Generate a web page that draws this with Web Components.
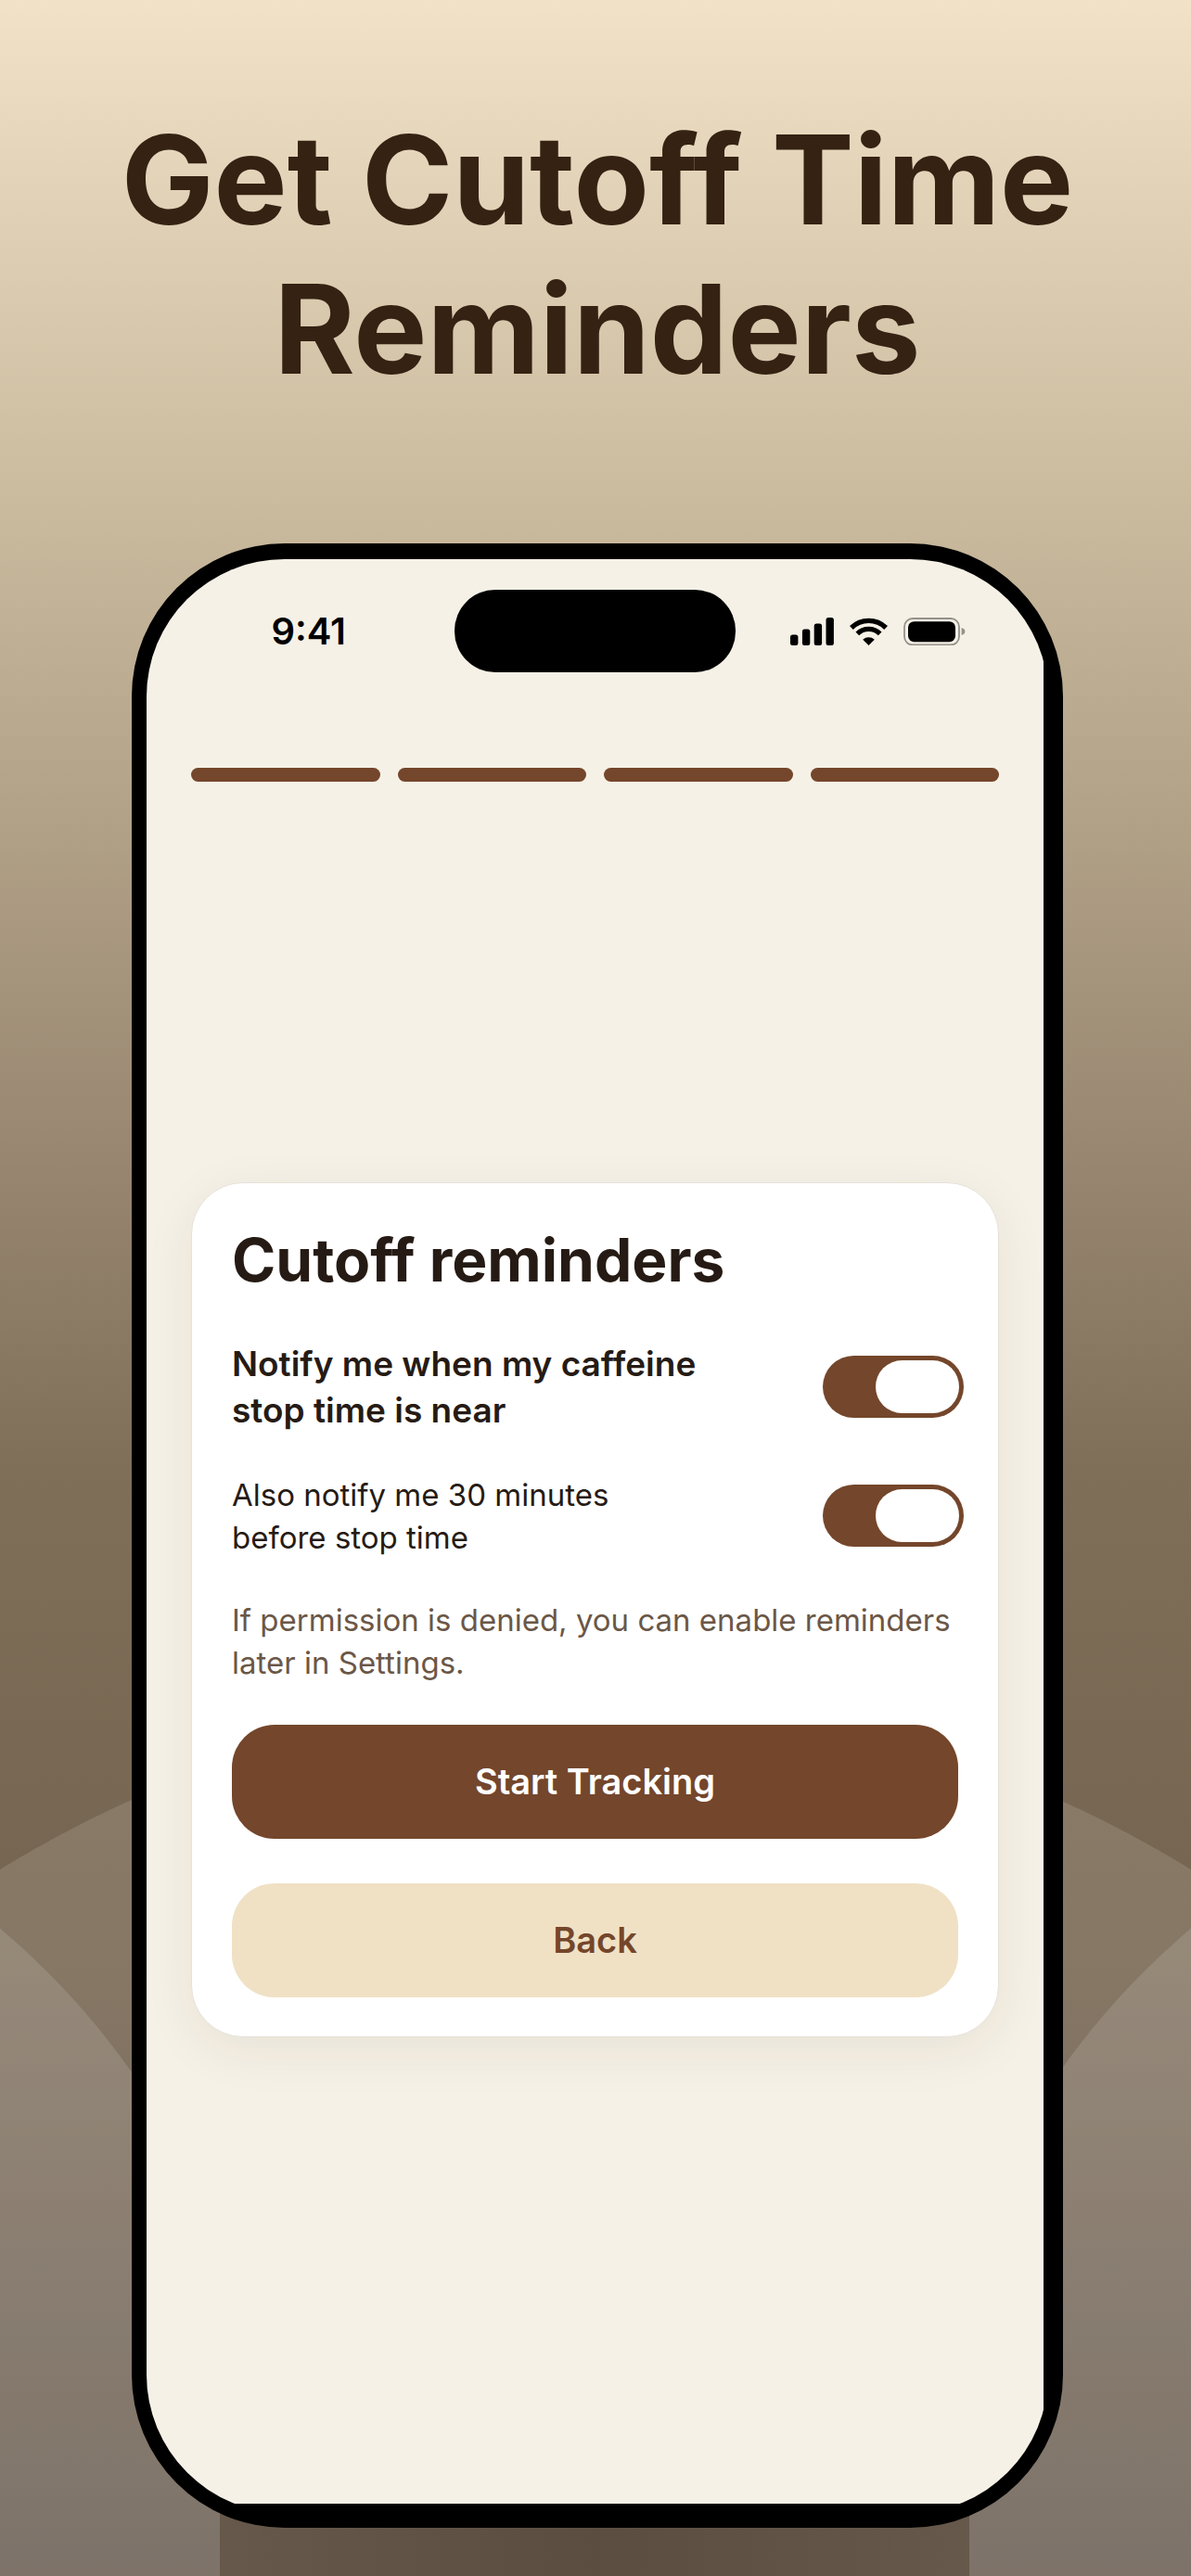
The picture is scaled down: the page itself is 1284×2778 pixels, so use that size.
<!DOCTYPE html>
<html lang="en">
<head>
<meta charset="utf-8">
<meta name="viewport" content="width=device-width, initial-scale=1">
<title>Get Cutoff Time Reminders</title>
<style>
  :root {
    --coffee: #74462b;
    --cream: #f0e1c5;
    --paper: #f6f1e6;
    --ink: #261b14;
  }
  body {
    margin: 0;
    font-family: Inter, "Liberation Sans", sans-serif;
    color: var(--ink);
  }
</style>
</head>
<body>
<promo-page>
  <span slot="headline">Get Cutoff Time Reminders</span>
  <phone-frame>
    <status-bar time="9:41"></status-bar>
    <step-progress steps="4" current="4"></step-progress>
    <reminder-card>
      <span slot="title">Cutoff reminders</span>
      <toggle-row checked strong>Notify me when my caffeine stop time is near</toggle-row>
      <toggle-row checked>Also notify me 30 minutes before stop time</toggle-row>
      <span slot="note">If permission is denied, you can enable reminders later in Settings.</span>
      <action-button slot="actions">Start Tracking</action-button>
      <action-button slot="actions" secondary>Back</action-button>
    </reminder-card>
  </phone-frame>
</promo-page>

<script>
class PromoPage extends HTMLElement {
  constructor() {
    super();
    this.attachShadow({ mode: 'open' });
  }

  connectedCallback() {
    this.shadowRoot.innerHTML = `
      <style>
        :host {
          display: block;
          position: relative;
          box-sizing: border-box;
          min-height: 100vh;
          padding: 113px 138px 52px 142px;
          overflow: hidden;
          background: linear-gradient(#f1e2c8 0%, #cbbb9f 19%, #b1a187 32%, #988670 45%, #7f6f59 57%, #786752 70%, #75644f 76%, #55473a 100%);
        }
        .hills {
          position: absolute;
          inset: 0;
          width: 100%;
          height: 100%;
        }
        h1 {
          position: relative;
          margin: 0 -60px 151px;
          font-size: 133px;
          line-height: 161px;
          font-weight: 700;
          text-align: center;
          color: #352213;
        }
        main {
          position: relative;
        }
      </style>
      <svg class="hills" viewBox="0 0 1284 2778" preserveAspectRatio="xMidYMax slice" aria-hidden="true">
        <defs>
          <linearGradient id="plinth">
            <stop offset="0" stop-color="#66584a"/>
            <stop offset=".5" stop-color="#5b4d3f"/>
            <stop offset="1" stop-color="#66584a"/>
          </linearGradient>
        </defs>
        <g fill="#fff" fill-opacity=".13">
          <circle cx="642" cy="3056" r="1222"/>
          <circle cx="-525" cy="2703" r="815"/>
          <circle cx="1809" cy="2703" r="815"/>
        </g>
        <rect x="237" y="2600" width="808" height="178" fill="url(#plinth)"/>
      </svg>
      <h1><slot name="headline"></slot></h1>
      <main><slot></slot></main>
    `;
  }
}

class PhoneFrame extends HTMLElement {
  constructor() {
    super();
    this.attachShadow({ mode: 'open' });
  }

  connectedCallback() {
    this.shadowRoot.innerHTML = `
      <style>
        :host {
          display: block;
          border: 16px solid #000;
          border-top-width: 17px;
          border-radius: 165px;
          padding: 0 5px 10px 0;
          background: #000;
          overflow: hidden;
        }
        .screen {
          display: flex;
          flex-direction: column;
          box-sizing: border-box;
          min-height: 2097px;
          padding: 33px 48px 72px;
          background: var(--paper);
        }
      </style>
      <div class="screen"><slot></slot></div>
    `;
  }
}

class StatusBar extends HTMLElement {
  constructor() {
    super();
    this.attachShadow({ mode: 'open' });
  }

  connectedCallback() {
    this.shadowRoot.innerHTML = `
      <style>
        :host {
          display: grid;
          grid-template-columns: 1fr 303px 1fr;
          align-items: center;
          color: #000;
        }
        time {
          justify-self: end;
          padding-right: 117px;
          font-size: 40px;
          line-height: 48px;
          font-weight: 600;
        }
        .island {
          height: 89px;
          border-radius: 44px;
          background: #000;
        }
        .icons {
          display: flex;
          gap: 17px;
          padding-left: 59px;
        }
        svg {
          display: block;
          flex: none;
        }
      </style>
      <time>${this.getAttribute('time')}</time>
      <div class="island"></div>
      <div class="icons">
        <svg width="47" height="30" viewBox="0 0 47 30" role="img" aria-label="Signal">
          <rect x="0" y="18.5" width="8.4" height="11.5" rx="2.5"/>
          <rect x="12.9" y="12.5" width="8.4" height="17.5" rx="2.5"/>
          <rect x="25.7" y="6.5" width="8.4" height="23.5" rx="2.5"/>
          <rect x="38.5" y="0" width="8.4" height="30" rx="2.5"/>
        </svg>
        <svg width="41" height="30" viewBox="0 0 41 30" role="img" aria-label="Wi-Fi">
          <g fill="none" stroke="#000">
            <path stroke-width="5.4" d="M1.9 11 A26.6 26.6 0 0 1 39.1 11"/>
            <path stroke-width="5.2" d="M8.3 17.4 A17.3 17.3 0 0 1 32.7 17.4"/>
          </g>
          <path d="M20.5 30 L14.2 23.7 A9.6 9.6 0 0 1 26.8 23.7 Z"/>
        </svg>
        <svg width="68" height="30" viewBox="0 0 68 30" role="img" aria-label="Battery">
          <rect x="1" y="1" width="59" height="28.4" rx="9" fill="none" stroke="#94918a" stroke-width="1.8"/>
          <rect x="5" y="4.2" width="51" height="22" rx="6.5"/>
          <path d="M62.6 11 Q66.4 12.2 66.4 15 Q66.4 17.8 62.6 19 Z" fill="#94918a"/>
        </svg>
      </div>
    `;
  }
}

class StepProgress extends HTMLElement {
  constructor() {
    super();
    this.attachShadow({ mode: 'open' });
  }

  connectedCallback() {
    const steps = Number(this.getAttribute('steps'));
    const current = Number(this.getAttribute('current'));
    let bars = '';
    for (let i = 1; i <= steps; i++) {
      bars += `<span class="${i <= current ? 'done' : ''}"></span>`;
    }
    this.setAttribute('role', 'img');
    this.setAttribute('aria-label', `Step ${current} of ${steps}`);
    this.shadowRoot.innerHTML = `
      <style>
        :host {
          display: flex;
          gap: 19px;
          margin-top: 103px;
        }
        span {
          flex: 1;
          height: 15px;
          border-radius: 8px;
          background: var(--cream);
        }
        .done {
          background: var(--coffee);
        }
      </style>
      ${bars}
    `;
  }
}

class ReminderCard extends HTMLElement {
  constructor() {
    super();
    this.attachShadow({ mode: 'open' });
  }

  connectedCallback() {
    this.shadowRoot.innerHTML = `
      <style>
        :host {
          display: block;
          box-sizing: border-box;
          margin: auto 0;
          padding: 43px 43px 42px;
          border: 1px solid #e6e2da;
          border-radius: 56px;
          background: #fff;
          box-shadow: 0 14px 56px rgba(38, 27, 20, 0.07);
        }
        h2 {
          margin: 0 0 47px;
          font-size: 64px;
          line-height: 80px;
          font-weight: 700;
        }
        .rows {
          display: flex;
          flex-direction: column;
          gap: 43px;
        }
        p {
          margin: 43px 0 44px;
          font-size: 33px;
          line-height: 46px;
          color: #6b5747;
        }
        .actions {
          display: flex;
          flex-direction: column;
          gap: 48px;
        }
      </style>
      <h2><slot name="title"></slot></h2>
      <div class="rows"><slot></slot></div>
      <p><slot name="note"></slot></p>
      <div class="actions"><slot name="actions"></slot></div>
    `;
  }
}

class ToggleRow extends HTMLElement {
  constructor() {
    super();
    this.attachShadow({ mode: 'open' });
  }

  connectedCallback() {
    this.shadowRoot.innerHTML = `
      <style>
        :host {
          display: block;
        }
        label {
          display: flex;
          align-items: center;
          justify-content: space-between;
          height: 92px;
          margin-right: -6px;
          font-size: 33px;
          line-height: 46px;
          cursor: pointer;
        }
        .text {
          max-width: 440px;
        }
        :host([strong]) label {
          height: auto;
          font-size: 37px;
          line-height: 50px;
          font-weight: 600;
        }
        :host([strong]) .text {
          max-width: 540px;
        }
        input {
          appearance: none;
          flex: none;
          display: flex;
          box-sizing: border-box;
          width: 152px;
          height: 67px;
          margin: 0;
          padding: 5px;
          border-radius: 34px;
          background: #d9d2c6;
          cursor: pointer;
        }
        input::before {
          content: "";
          width: 90px;
          border-radius: 29px;
          background: #fff;
        }
        input:checked {
          justify-content: flex-end;
          background: var(--coffee);
        }
      </style>
      <label>
        <span class="text"><slot></slot></span>
        <input type="checkbox" role="switch" ${this.hasAttribute('checked') ? 'checked' : ''}>
      </label>
    `;
  }
}

class ActionButton extends HTMLElement {
  constructor() {
    super();
    this.attachShadow({ mode: 'open' });
  }

  connectedCallback() {
    this.shadowRoot.innerHTML = `
      <style>
        :host {
          display: block;
        }
        button {
          display: block;
          width: 100%;
          padding: 37px 24px;
          border: none;
          border-radius: 46px;
          background: var(--coffee);
          color: #fff;
          font: 600 38px/49px Inter, "Liberation Sans", sans-serif;
          cursor: pointer;
        }
        :host([secondary]) button {
          background: var(--cream);
          color: var(--coffee);
        }
      </style>
      <button type="button"><slot></slot></button>
    `;
  }
}

customElements.define('promo-page', PromoPage);
customElements.define('phone-frame', PhoneFrame);
customElements.define('status-bar', StatusBar);
customElements.define('step-progress', StepProgress);
customElements.define('reminder-card', ReminderCard);
customElements.define('toggle-row', ToggleRow);
customElements.define('action-button', ActionButton);
</script>
</body>
</html>
